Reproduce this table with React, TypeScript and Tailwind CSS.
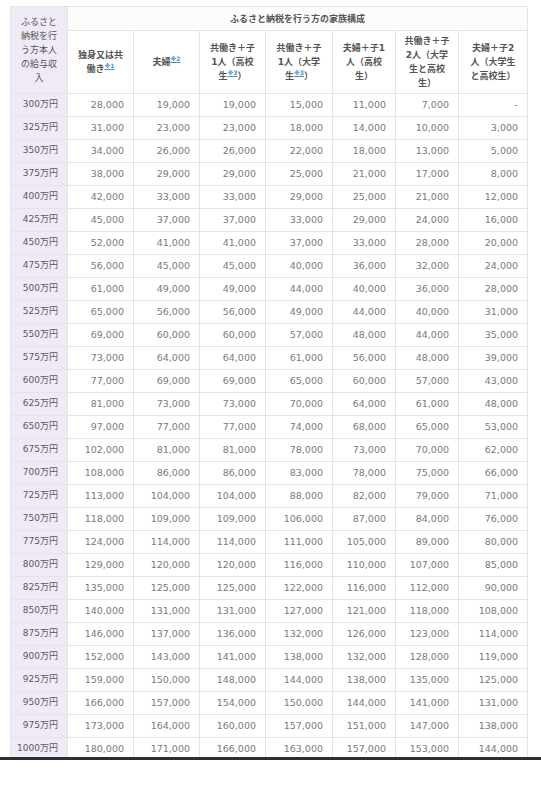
const cols = [57, 66, 66, 66, 67, 63, 63, 69];

const rows: [string, string[]][] = [
  ["300万円", ["28,000", "19,000", "19,000", "15,000", "11,000", "7,000", "-"]],
  ["325万円", ["31,000", "23,000", "23,000", "18,000", "14,000", "10,000", "3,000"]],
  ["350万円", ["34,000", "26,000", "26,000", "22,000", "18,000", "13,000", "5,000"]],
  ["375万円", ["38,000", "29,000", "29,000", "25,000", "21,000", "17,000", "8,000"]],
  ["400万円", ["42,000", "33,000", "33,000", "29,000", "25,000", "21,000", "12,000"]],
  ["425万円", ["45,000", "37,000", "37,000", "33,000", "29,000", "24,000", "16,000"]],
  ["450万円", ["52,000", "41,000", "41,000", "37,000", "33,000", "28,000", "20,000"]],
  ["475万円", ["56,000", "45,000", "45,000", "40,000", "36,000", "32,000", "24,000"]],
  ["500万円", ["61,000", "49,000", "49,000", "44,000", "40,000", "36,000", "28,000"]],
  ["525万円", ["65,000", "56,000", "56,000", "49,000", "44,000", "40,000", "31,000"]],
  ["550万円", ["69,000", "60,000", "60,000", "57,000", "48,000", "44,000", "35,000"]],
  ["575万円", ["73,000", "64,000", "64,000", "61,000", "56,000", "48,000", "39,000"]],
  ["600万円", ["77,000", "69,000", "69,000", "65,000", "60,000", "57,000", "43,000"]],
  ["625万円", ["81,000", "73,000", "73,000", "70,000", "64,000", "61,000", "48,000"]],
  ["650万円", ["97,000", "77,000", "77,000", "74,000", "68,000", "65,000", "53,000"]],
  ["675万円", ["102,000", "81,000", "81,000", "78,000", "73,000", "70,000", "62,000"]],
  ["700万円", ["108,000", "86,000", "86,000", "83,000", "78,000", "75,000", "66,000"]],
  ["725万円", ["113,000", "104,000", "104,000", "88,000", "82,000", "79,000", "71,000"]],
  ["750万円", ["118,000", "109,000", "109,000", "106,000", "87,000", "84,000", "76,000"]],
  ["775万円", ["124,000", "114,000", "114,000", "111,000", "105,000", "89,000", "80,000"]],
  ["800万円", ["129,000", "120,000", "120,000", "116,000", "110,000", "107,000", "85,000"]],
  ["825万円", ["135,000", "125,000", "125,000", "122,000", "116,000", "112,000", "90,000"]],
  ["850万円", ["140,000", "131,000", "131,000", "127,000", "121,000", "118,000", "108,000"]],
  ["875万円", ["146,000", "137,000", "136,000", "132,000", "126,000", "123,000", "114,000"]],
  ["900万円", ["152,000", "143,000", "141,000", "138,000", "132,000", "128,000", "119,000"]],
  ["925万円", ["159,000", "150,000", "148,000", "144,000", "138,000", "135,000", "125,000"]],
  ["950万円", ["166,000", "157,000", "154,000", "150,000", "144,000", "141,000", "131,000"]],
  ["975万円", ["173,000", "164,000", "160,000", "157,000", "151,000", "147,000", "138,000"]],
  ["1000万円", ["180,000", "171,000", "166,000", "163,000", "157,000", "153,000", "144,000"]],
];

function Note({ n }: { n: number }) {
  return (
    <a href="#" className="align-super text-[6px] leading-none text-[#3f8fd2] underline">
      ※{n}
    </a>
  );
}

const th = "border border-[#e4e4e4] px-[6px] text-center align-middle font-bold leading-[14px] text-[#555]";

export default function App() {
  return (
    <div
      className="bg-white"
      style={{ fontFamily: '"DejaVu Sans", "Noto Sans CJK JP", sans-serif' }}
    >
      <div className="h-[757px] overflow-hidden pl-[10px] pt-[6px]">
        <table className="w-[517px] table-fixed border-collapse text-[9px]">
          <colgroup>
            {cols.map((w, i) => (
              <col key={i} style={{ width: w }} />
            ))}
          </colgroup>
          <thead>
            <tr className="h-[24px]">
              <th rowSpan={2} className={`${th} bg-[#f0eaf6] font-normal text-[#5a5a5a]`}>
                ふるさと<br />納税を行<br />う方本人<br />の給与収<br />入
              </th>
              <th colSpan={7} className={`${th} bg-[#fcfcfc]`}>
                ふるさと納税を行う方の家族構成
              </th>
            </tr>
            <tr className="h-[63px]">
              <th className={th}>
                独身又は共<br />働き<Note n={1} />
              </th>
              <th className={th}>
                夫婦<Note n={2} />
              </th>
              <th className={th}>
                共働き＋子<br />1人（高校<br />生<Note n={3} />）
              </th>
              <th className={th}>
                共働き＋子<br />1人（大学<br />生<Note n={3} />）
              </th>
              <th className={th}>
                夫婦＋子1<br />人（高校<br />生）
              </th>
              <th className={th}>
                共働き＋子<br />2人（大学<br />生と高校<br />生）
              </th>
              <th className={th}>
                夫婦＋子2<br />人（大学生<br />と高校生）
              </th>
            </tr>
          </thead>
          <tbody>
            {rows.map(([income, vals]) => (
              <tr key={income} className="h-[23px]">
                <td className="border border-[#e4e4e4] bg-[#f0eaf6] pr-[9px] text-right text-[9px] text-[#5a5a5a]">
                  {income}
                </td>
                {vals.map((v, i) => (
                  <td
                    key={i}
                    className="border border-[#e4e4e4] pr-[9px] text-right text-[9.5px] text-[#7a7a7a]"
                  >
                    {v}
                  </td>
                ))}
              </tr>
            ))}
          </tbody>
        </table>
      </div>
      <div className="h-[3px] bg-[#2e2e2e]" />
    </div>
  );
}
